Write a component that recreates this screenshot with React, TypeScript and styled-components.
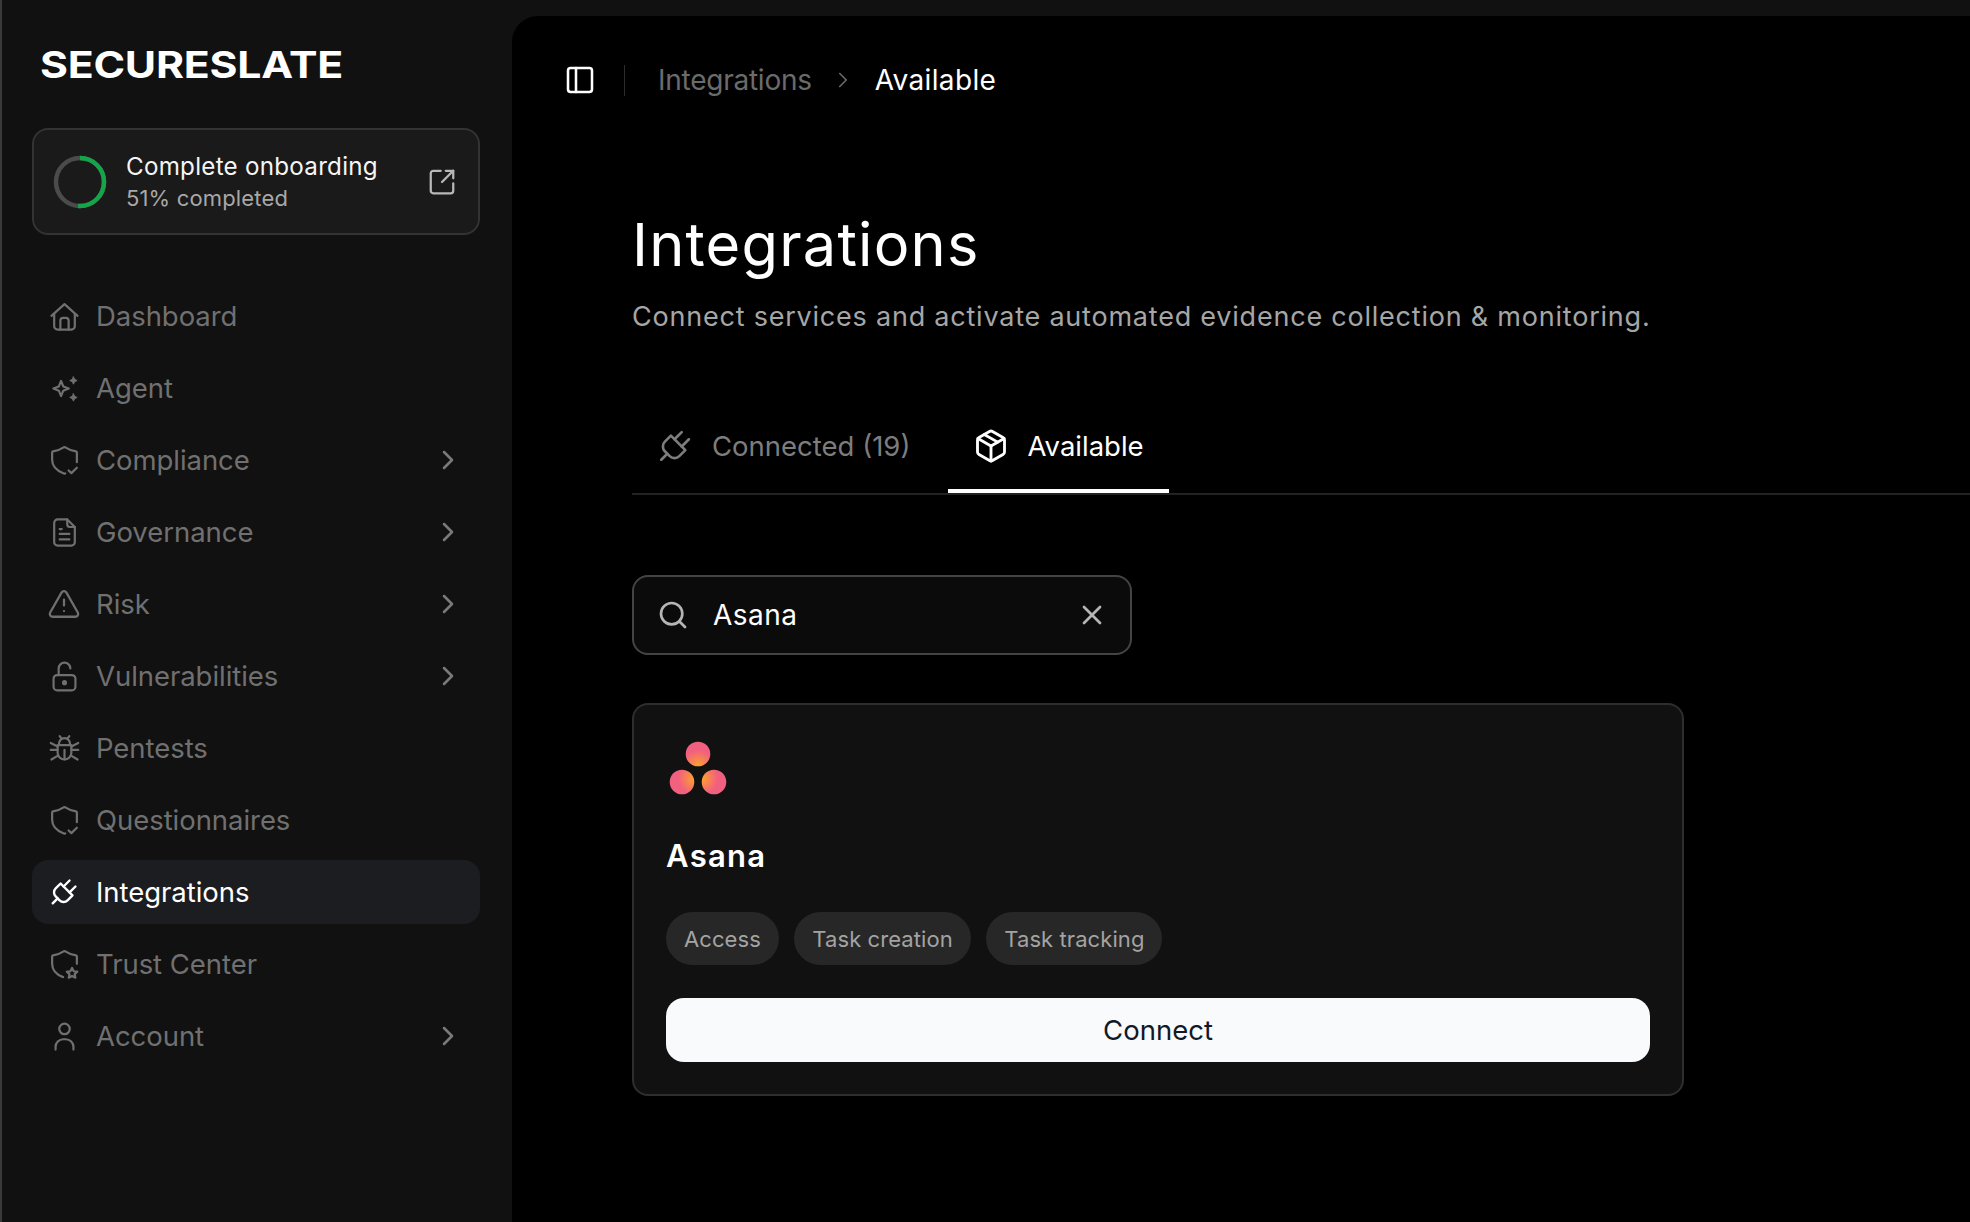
import React from "react";
import styled, { createGlobalStyle } from "styled-components";
import { ChevronRight, Search, X, PanelLeft, Package, SquareArrowOutUpRight, TriangleAlert } from "lucide-react";

const Global = createGlobalStyle`
  html, body { margin: 0; padding: 0; background: #111111; height: 100%; }
  #root { height: 100%; }
  * { box-sizing: border-box; }
  svg { flex: none; }
`;

const Shell = styled.div`
  display: flex;
  height: 1222px;
  overflow: hidden;
  background: #111111;
  font-family: Inter, "Liberation Sans", sans-serif;
`;

const Sidebar = styled.aside`
  flex: 0 0 512px;
  border-left: 2px solid #3a3a3a;
  padding: 0 30px;
  display: flex;
  flex-direction: column;
`;

const LogoRow = styled.div`
  height: 128px;
  padding: 48px 0 0 8px;
`;

const Logo = styled.div`
  display: inline-block;
  font-size: 37px;
  line-height: 34px;
  font-weight: 700;
  color: #ffffff;
  letter-spacing: -0.2px;
  transform: scaleX(1.155);
  transform-origin: left center;
  white-space: nowrap;
`;

const Onboard = styled.div`
  height: 107px;
  width: 448px;
  border: 2px solid #333333;
  border-radius: 16px;
  background: #1a1a1a;
  display: flex;
  align-items: center;
  padding: 0 21px 0 19px;
  color: #ffffff;
`;

const OnboardText = styled.div`
  flex: 1;
  margin-left: 19px;
  display: flex;
  flex-direction: column;
  gap: 3px;
`;

const OnboardTitle = styled.div`
  font-size: 24.2px;
  line-height: 29px;
  letter-spacing: 0.25px;
  color: #f5f5f5;
`;

const OnboardSub = styled.div`
  font-size: 22px;
  line-height: 28px;
  letter-spacing: 0.15px;
  color: #a8a8a8;
`;

const ExternalBtn = styled.span`
  display: flex;
  color: #b8b8b8;
`;

const Nav = styled.nav`
  margin-top: 49px;
  display: flex;
  flex-direction: column;
  gap: 8px;
  width: 448px;
`;

const NavRow = styled.div<{ $active?: boolean }>`
  height: 64px;
  border-radius: 16px;
  display: flex;
  align-items: center;
  padding: 0 16px 0 18px;
  background: ${(p) => (p.$active ? "#1c1d21" : "transparent")};
  color: ${(p) => (p.$active ? "#ffffff" : "#707070")};
`;

const NavIcon = styled.span`
  flex: 0 0 28px;
  width: 28px;
  height: 28px;
  display: flex;
  align-items: center;
  justify-content: center;
`;

const NavLabel = styled.span`
  flex: 1;
  margin-left: 18px;
  font-size: 27.5px;
  line-height: 34px;
  letter-spacing: -0.05px;
`;

const Chevron = styled.span`
  display: flex;
  color: #7a7a7a;
`;

const Main = styled.main`
  flex: 1;
  min-width: 0;
  margin-top: 16px;
  background: #000000;
  border-top-left-radius: 26px;
  display: flex;
  flex-direction: column;
`;

const Header = styled.header`
  height: 128px;
  flex: none;
  display: flex;
  align-items: center;
  padding-left: 52px;
  color: #ffffff;
`;

const Divider = styled.span`
  width: 1px;
  height: 31px;
  background: #2c2c2c;
  margin: 0 33px 0 28px;
`;

const Crumb = styled.span<{ $current?: boolean }>`
  font-size: 28px;
  line-height: 34px;
  letter-spacing: ${(p) => (p.$current ? "0.35px" : "-0.25px")};
  color: ${(p) => (p.$current ? "#ffffff" : "#6b6b6b")};
`;

const CrumbSep = styled.span`
  display: flex;
  margin: 0 18.5px;
  color: #6b6b6b;
`;

const Content = styled.div`
  padding: 65px 0 0 120px;
  display: flex;
  flex-direction: column;
  align-items: flex-start;
`;

const Title = styled.h1`
  margin: 0;
  font-size: 59.5px;
  line-height: 70px;
  font-weight: 400;
  letter-spacing: 1.2px;
  color: #ffffff;
`;

const Subtitle = styled.p`
  margin: 21px 0 0;
  font-size: 27px;
  line-height: 34px;
  letter-spacing: 0.78px;
  color: #a6a6a6;
`;

const TabBar = styled.div`
  margin-top: 69px;
  align-self: stretch;
  display: flex;
  gap: 13px;
  border-bottom: 2px solid #222222;
  height: 92px;
`;

const Tab = styled.div<{ $active?: boolean }>`
  height: 90px;
  display: flex;
  align-items: center;
  padding: 0 25px 1px 26px;
  border-bottom: 4px solid ${(p) => (p.$active ? "#ffffff" : "transparent")};
  color: ${(p) => (p.$active ? "#ffffff" : "#7d7d7d")};
  font-size: 27.5px;
`;

const TabIcon = styled.span<{ $left?: number; $right: number }>`
  display: flex;
  margin-left: ${(p) => p.$left ?? 0}px;
  margin-right: ${(p) => p.$right}px;
`;

const SearchBox = styled.div`
  margin-top: 80px;
  width: 500px;
  height: 80px;
  border: 2px solid #444444;
  border-radius: 16px;
  background: #0b0b0b;
  display: flex;
  align-items: center;
  padding: 0 22px 0 23px;
  color: #b5b5b5;
`;

const SearchText = styled.span`
  flex: 1;
  margin-left: 24px;
  font-size: 28px;
  letter-spacing: 0.45px;
  color: #ffffff;
`;

const Card = styled.section`
  margin-top: 48px;
  width: 1052px;
  height: 393px;
  background: #111111;
  border: 2px solid #2e2e2e;
  border-radius: 16px;
  padding: 32px;
  display: flex;
  flex-direction: column;
  align-items: flex-start;
`;

const MarkSlot = styled.div`
  display: flex;
  margin: 4px 0 0 3px;
`;

const CardName = styled.h2`
  margin: 42px 0 0;
  font-size: 31px;
  line-height: 38px;
  font-weight: 600;
  letter-spacing: 1.3px;
  color: #ffffff;
`;

const Chips = styled.div`
  margin-top: 37px;
  display: flex;
  gap: 15.5px;
`;

const Chip = styled.span`
  height: 53px;
  padding: 0 18px;
  display: flex;
  align-items: center;
  border-radius: 27px;
  background: #272727;
  color: #a3a3a3;
  font-size: 22px;
  letter-spacing: 0.08px;
`;

const ConnectButton = styled.button`
  margin-top: 33px;
  align-self: stretch;
  height: 64px;
  border: 0;
  border-radius: 18px;
  background: #f8fafc;
  color: #111827;
  font-family: inherit;
  font-size: 27.5px;
`;

const Ic: React.FC<{ children: React.ReactNode; size?: number; sw?: number }> = ({ children, size = 33, sw = 1.6 }) => (
  <svg width={size} height={size} viewBox="0 0 24 24" fill="none" stroke="currentColor" strokeWidth={sw} strokeLinecap="round" strokeLinejoin="round">
    {children}
  </svg>
);

const HomeI = () => (
  <Ic>
    <path d="M2.5 11.5 12 3l9.5 8.5" />
    <path d="M4.5 10v9a2.5 2.5 0 0 0 2.5 2.5h10a2.5 2.5 0 0 0 2.5-2.5v-9" />
    <path d="M9 21.5V15a2 2 0 0 1 2-2h2a2 2 0 0 1 2 2v6.5" />
  </Ic>
);
const SparkI = () => (
  <Ic>
    <path d="M9.5 6.5l1.6 4 4 1.5-4 1.6-1.6 3.9-1.6-3.9-4-1.6 4-1.5z" />
    <path d="M18.5 3.5l.9 1.8 1.8.9-1.8.9-.9 1.8-.9-1.8-1.8-.9 1.8-.9z" fill="currentColor" strokeWidth="0.6" />
    <path d="M18.5 15.8l.9 1.8 1.8.9-1.8.9-.9 1.8-.9-1.8-1.8-.9 1.8-.9z" fill="currentColor" strokeWidth="0.6" />
  </Ic>
);
const ShieldCheckI = () => (
  <Ic>
    <path d="M12.5 21.4c-.3.1-.7.1-1 0C6.5 19.6 3 16.3 3 11.5V6.2c0-.4.3-.8.7-.9 2.9-.4 5.3-1.3 7.7-2.9.4-.2.8-.2 1.2 0 2.4 1.6 4.8 2.5 7.7 2.9.4.1.7.5.7.9v7" />
    <path d="M15 19.3l2 1.9 4-3.9" />
  </Ic>
);
const FileI = () => (
  <Ic>
    <path d="M14 2.5H7a2.5 2.5 0 0 0-2.5 2.5v14A2.5 2.5 0 0 0 7 21.5h10a2.5 2.5 0 0 0 2.5-2.5V8z" />
    <path d="M14 2.5V6a2 2 0 0 0 2 2h3.5" />
    <path d="M8.5 9.5h1.5M8.5 13h7M8.5 17h7" />
  </Ic>
);
const LockI = () => (
  <Ic size={35} sw={1.5}>
    <rect x="4.5" y="11" width="15" height="10.5" rx="2.5" />
    <path d="M8 11V6.5a4 4 0 0 1 8 0" />
    <circle cx="12" cy="16.2" r="1" fill="currentColor" />
  </Ic>
);
const BugI = () => (
  <Ic>
    <path d="M8 8.5a4 4 0 0 1 8 0" />
    <path d="M7 9.5h10v5.5a5 5 0 0 1-10 0z" />
    <path d="M12 13v7" />
    <path d="M8.5 3l1.5 2M15.5 3L14 5M2 8l5 2.5M22 8l-5 2.5M2 13h5M17 13h5M2.5 20l5-3M21.5 20l-5-3" />
  </Ic>
);
const PlugI: React.FC<{ size?: number; sw?: number }> = ({ size = 28, sw = 1.7 }) => (
  <svg width={size} height={size} viewBox="3 1 20 20" fill="none" stroke="currentColor" strokeWidth={sw} strokeLinecap="round" strokeLinejoin="round">
    <g transform="rotate(45 12 12)">
      <path d="M12 22v-5" />
      <path d="M9 8V2" />
      <path d="M15 8V2" />
      <path d="M18 8v5a4 4 0 0 1-4 4h-4a4 4 0 0 1-4-4V8Z" />
    </g>
  </svg>
);
const ShieldStarI = () => (
  <Ic>
    <path d="M11 21.2C6 19.4 3 16.2 3 11.5V6.2c0-.4.3-.8.7-.9 2.9-.4 5.3-1.3 7.7-2.9.4-.2.8-.2 1.2 0 2.4 1.6 4.8 2.5 7.7 2.9.4.1.7.5.7.9v5.3" />
    <path d="M17.5 14.5l1.2 2.4 2.6.3-1.9 1.8.5 2.6-2.4-1.3-2.4 1.3.5-2.6-1.9-1.8 2.6-.3z" />
  </Ic>
);
const UserI = () => (
  <Ic>
    <circle cx="12" cy="6.5" r="3.8" />
    <path d="M5.5 21.5v-2a5.5 5.5 0 0 1 5.5-5.5h2a5.5 5.5 0 0 1 5.5 5.5v2" />
  </Ic>
);

const items: { label: string; icon: React.ReactNode; more?: boolean; active?: boolean }[] = [
  { label: "Dashboard", icon: <HomeI /> },
  { label: "Agent", icon: <SparkI /> },
  { label: "Compliance", icon: <ShieldCheckI />, more: true },
  { label: "Governance", icon: <FileI />, more: true },
  { label: "Risk", icon: <TriangleAlert size={34} strokeWidth={1.6} />, more: true },
  { label: "Vulnerabilities", icon: <LockI />, more: true },
  { label: "Pentests", icon: <BugI /> },
  { label: "Questionnaires", icon: <ShieldCheckI /> },
  { label: "Integrations", icon: <PlugI />, active: true },
  { label: "Trust Center", icon: <ShieldStarI /> },
  { label: "Account", icon: <UserI />, more: true },
];

const Ring = () => {
  const r = 24;
  const c = 2 * Math.PI * r;
  return (
    <svg width="54" height="54" viewBox="0 0 54 54" fill="none">
      <circle cx="27" cy="27" r={r} stroke="#4b4b4b" strokeWidth="4.5" />
      <circle
        cx="27"
        cy="27"
        r={r}
        stroke="#16a34a"
        strokeWidth="4.5"
        strokeDasharray={`${c * 0.51} ${c}`}
        transform="rotate(-90 27 27)"
      />
    </svg>
  );
};

const AsanaMark = () => (
  <svg width="58" height="54" viewBox="0 0 58 54">
    <defs>
      <radialGradient id="a1" cx="50%" cy="100%" r="65%">
        <stop offset="0%" stopColor="#ffa32b" />
        <stop offset="100%" stopColor="#f2607f" />
      </radialGradient>
      <radialGradient id="a2" cx="100%" cy="35%" r="65%">
        <stop offset="0%" stopColor="#ffa32b" />
        <stop offset="100%" stopColor="#f2607f" />
      </radialGradient>
      <radialGradient id="a3" cx="0%" cy="35%" r="65%">
        <stop offset="0%" stopColor="#ffa32b" />
        <stop offset="100%" stopColor="#f2607f" />
      </radialGradient>
    </defs>
    <circle cx="29" cy="13" r="12.3" fill="url(#a1)" />
    <circle cx="13" cy="41" r="12.3" fill="url(#a2)" />
    <circle cx="45" cy="41" r="12.3" fill="url(#a3)" />
  </svg>
);

export default function App() {
  return (
    <Shell>
      <Global />
      <Sidebar>
        <LogoRow>
          <Logo>SECURESLATE</Logo>
        </LogoRow>
        <Onboard>
          <Ring />
          <OnboardText>
            <OnboardTitle>Complete onboarding</OnboardTitle>
            <OnboardSub>51% completed</OnboardSub>
          </OnboardText>
          <ExternalBtn>
            <SquareArrowOutUpRight size={30} strokeWidth={1.8} />
          </ExternalBtn>
        </Onboard>
        <Nav>
          {items.map((it) => (
            <NavRow key={it.label} $active={it.active}>
              <NavIcon>{it.icon}</NavIcon>
              <NavLabel>{it.label}</NavLabel>
              {it.more && (
                <Chevron>
                  <ChevronRight size={32} strokeWidth={1.9} />
                </Chevron>
              )}
            </NavRow>
          ))}
        </Nav>
      </Sidebar>
      <Main>
        <Header>
          <PanelLeft size={32} strokeWidth={1.9} />
          <Divider />
          <Crumb>Integrations</Crumb>
          <CrumbSep>
            <ChevronRight size={26} strokeWidth={1.5} />
          </CrumbSep>
          <Crumb $current>Available</Crumb>
        </Header>
        <Content>
          <Title>Integrations</Title>
          <Subtitle>Connect services and activate automated evidence collection &amp; monitoring.</Subtitle>
          <TabBar>
            <Tab>
              <TabIcon $right={20}>
                <PlugI size={34} sw={1.55} />
              </TabIcon>
              Connected (19)
            </Tab>
            <Tab $active>
              <TabIcon $left={-1} $right={18}>
                <Package size={36} strokeWidth={1.9} />
              </TabIcon>
              Available
            </Tab>
          </TabBar>
          <SearchBox>
            <Search size={32} strokeWidth={2} />
            <SearchText>Asana</SearchText>
            <X size={32} strokeWidth={2} />
          </SearchBox>
          <Card>
            <MarkSlot>
              <AsanaMark />
            </MarkSlot>
            <CardName>Asana</CardName>
            <Chips>
              <Chip>Access</Chip>
              <Chip>Task creation</Chip>
              <Chip>Task tracking</Chip>
            </Chips>
            <ConnectButton>Connect</ConnectButton>
          </Card>
        </Content>
      </Main>
    </Shell>
  );
}
